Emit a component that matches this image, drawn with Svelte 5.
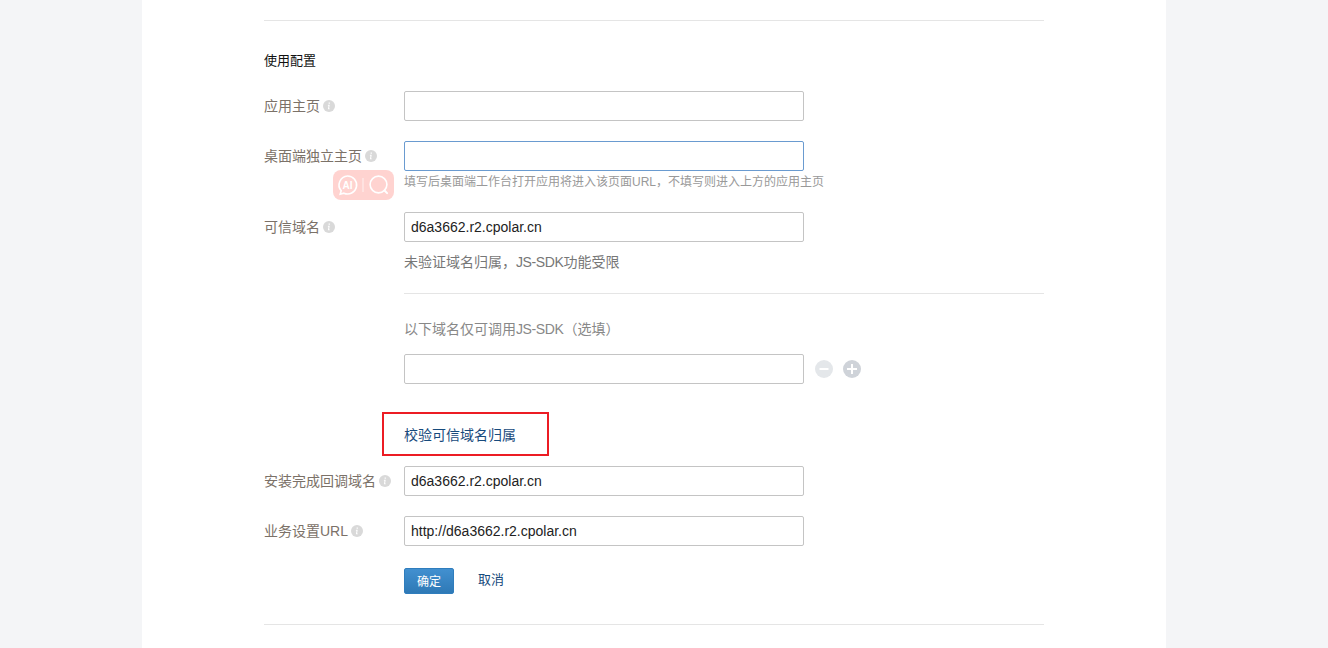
<script>
  let trusted = "d6a3662.r2.cpolar.cn";
</script>

{#snippet info()}
  <svg class="info" width="12" height="12" viewBox="0 0 12 12">
    <circle cx="6" cy="6" r="6" fill="#d9d9d9" />
    <path d="M6.9 2.4v1.3H5.6V2.4zM6.7 4.8l-.6 3.6h.7v.9H4.9l.6-3.6h-.6v-.9z" fill="#fff" />
  </svg>
{/snippet}

<div class="page">
  <div class="card">
    <hr class="line" />
    <h3>使用配置</h3>

    <div class="row first">
      <span class="label">应用主页{@render info()}</span>
      <input type="text" />
    </div>

    <div class="row gap20">
      <span class="label">桌面端独立主页{@render info()}</span>
      <div class="field">
        <input type="text" class="focus" />
        <p class="hint">填写后桌面端工作台打开应用将进入该页面URL，不填写则进入上方的应用主页</p>
      </div>
      <div class="ai">
        <svg width="61" height="30" viewBox="0 0 61 30" fill="none" stroke="#fff" stroke-width="1.6">
          <path d="M14.5 6a9 9 0 1 1-3.6 17.2L7.2 24.2l1-3.4A9 9 0 0 1 14.5 6z" />
          <text x="14.5" y="19" text-anchor="middle" class="ai-text">AI</text>
          <path d="M30 8v14" stroke-width="1" opacity=".7" />
          <circle cx="45.5" cy="14.5" r="8.4" />
          <path d="M51.5 20.5l2.6 2.6" stroke-width="2" stroke-linecap="round" />
        </svg>
      </div>
    </div>

    <div class="row trusted">
      <span class="label">可信域名{@render info()}</span>
      <div class="field">
        <input type="text" value={trusted} />
        <p class="note">未验证域名归属，<span class="latin">JS-SDK</span>功能受限</p>
        <hr class="line sub" />
        <p class="optional">以下域名仅可调用<span class="latin">JS-SDK</span>（选填）</p>
        <div class="with-actions">
          <input type="text" />
          <span class="round minus"><svg width="18" height="18" viewBox="0 0 18 18"><circle cx="9" cy="9" r="9" fill="#e4e7ea" /><path d="M4.5 9h9" stroke="#fff" stroke-width="2" /></svg></span>
          <span class="round"><svg width="18" height="18" viewBox="0 0 18 18"><circle cx="9" cy="9" r="9" fill="#cfd3d9" /><path d="M4 9h10M9 4v10" stroke="#fff" stroke-width="2" /></svg></span>
        </div>
        <div class="verify">
          <a href="#verify">校验可信域名归属</a>
          <span class="redbox"></span>
        </div>
      </div>
    </div>

    <div class="row callback">
      <span class="label">安装完成回调域名{@render info()}</span>
      <input type="text" value={trusted} />
    </div>

    <div class="row gap20">
      <span class="label">业务设置URL{@render info()}</span>
      <input type="text" value="http://d6a3662.r2.cpolar.cn" />
    </div>

    <div class="actions">
      <button type="button">确定</button>
      <a href="#cancel">取消</a>
    </div>

    <hr class="line bottom" />
  </div>
</div>

<style>
  :global(body) {
    margin: 0;
    background: #f4f5f7;
  }

  .page {
    height: 648px;
    overflow: hidden;
    font-family: "Liberation Sans", "Noto Sans CJK SC", sans-serif;
    font-size: 14px;
    color: #777;
  }

  .card {
    width: 780px;
    height: 648px;
    margin: 0 0 0 142px;
    padding: 20px 122px 0;
    background: #fff;
  }

  .line {
    height: 1px;
    margin: 0;
    border: 0;
    background: #e5e5e5;
  }

  h3 {
    margin: 31px 0 0;
    font-size: 13px;
    line-height: 18px;
    font-weight: 400;
    color: #111;
  }

  .row {
    position: relative;
    display: flex;
    align-items: flex-start;
  }

  .first {
    margin-top: 21px;
  }

  .gap20 {
    margin-top: 20px;
  }

  .trusted {
    margin-top: 0;
  }

  .callback {
    margin-top: 21px;
  }

  .label {
    display: flex;
    align-items: center;
    flex: 0 0 140px;
    height: 30px;
    line-height: 28px;
    color: #7b7168;
  }

  .info {
    margin-left: 3px;
  }

  input {
    box-sizing: border-box;
    display: block;
    width: 400px;
    height: 30px;
    padding: 0 6px;
    border: 1px solid #c4c4c4;
    border-radius: 2px;
    outline: 0;
    background: #fff;
    font-family: inherit;
    font-size: 14px;
    color: #222;
  }

  input.focus {
    border-color: #6a9bd0;
  }

  .field {
    flex: 1;
  }

  .hint {
    margin: 3px 0 0;
    height: 38px;
    font-size: 12px;
    line-height: 17px;
    color: #999;
  }

  .note {
    margin: 11px 0 0;
    line-height: 18px;
    color: #777;
  }

  .latin {
    letter-spacing: -0.4px;
  }

  .sub {
    margin-top: 22px;
  }

  .optional {
    margin: 26px 0 0;
    line-height: 18px;
    color: #888;
  }

  .with-actions {
    display: flex;
    align-items: center;
    margin-top: 16px;
  }

  .round {
    display: flex;
    margin-left: 10px;
  }

  .minus {
    margin-left: 11px;
  }

  .verify {
    position: relative;
    margin-top: 43px;
    line-height: 16px;
    height: 18px;
  }

  a {
    color: #174a7c;
    text-decoration: none;
  }

  .redbox {
    position: absolute;
    left: -22px;
    top: -15px;
    box-sizing: border-box;
    width: 167px;
    height: 44px;
    border: 2px solid #ec1c24;
  }

  .actions {
    display: flex;
    align-items: center;
    margin-top: 22px;
    margin-left: 140px;
    gap: 24px;
  }

  button {
    width: 50px;
    height: 26px;
    padding: 0 0 2px;
    border: 1px solid #2f7dbd;
    border-radius: 2px;
    background: linear-gradient(#4290d0, #2e79b6);
    font-family: inherit;
    font-size: 12px;
    color: #fff;
  }

  .actions a {
    margin-top: -5px;
    font-size: 13px;
  }

  .bottom {
    margin-top: 30px;
  }

  .ai {
    position: absolute;
    left: 69px;
    top: 29px;
    display: flex;
    width: 61px;
    height: 30px;
    border-radius: 8px;
    background: #ffd3d0;
  }

  .ai-text {
    fill: #fff;
    stroke: none;
    font-size: 10px;
    font-weight: 700;
  }
</style>
